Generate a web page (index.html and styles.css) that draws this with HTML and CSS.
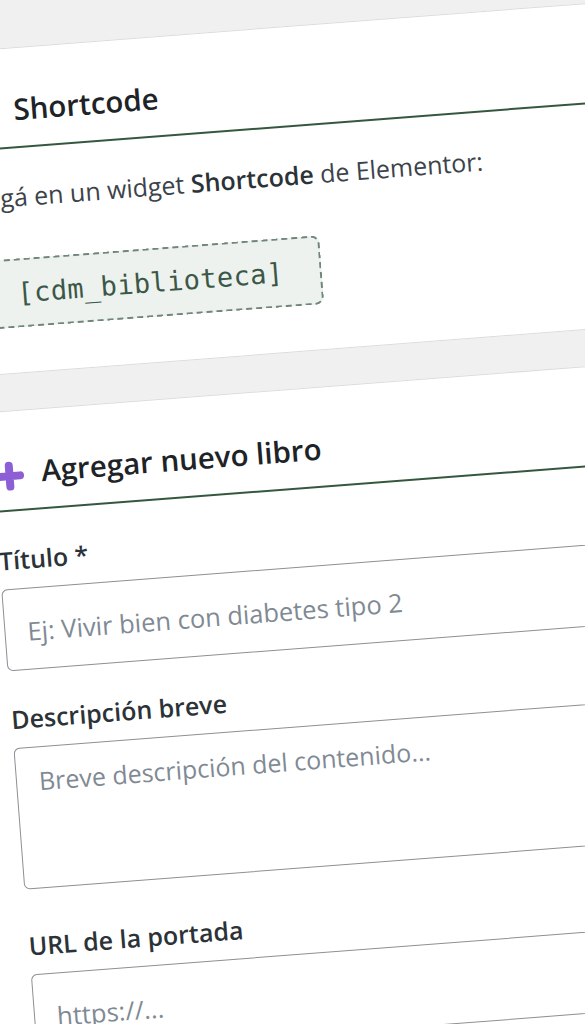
FILE: index.html
```html
<!DOCTYPE html>
<html lang="es">
<head>
<meta charset="utf-8">
<title>Biblioteca · Ajustes</title>
<link rel="stylesheet" href="styles.css">
</head>
<body>
<main class="stage">
  <section class="card card-short">
    <h2 class="card-title">
      <span class="title-icon" aria-hidden="true"></span>
      <span>Shortcode</span>
    </h2>
    <p class="card-text">Pegá en un widget <strong>Shortcode</strong> de Elementor:</p>
    <code class="shortcode">[cdm_biblioteca]</code>
  </section>

  <section class="card">
    <h2 class="card-title">
      <span class="title-icon" aria-hidden="true">
        <svg viewBox="0 0 36 36" width="36" height="36">
          <path d="M17 11V32M6.5 21.5H27.5" stroke="#8d5fd6" stroke-width="8" stroke-linecap="round" fill="none"/>
        </svg>
      </span>
      <span>Agregar nuevo libro</span>
    </h2>

    <form class="book-form">
      <div class="field">
        <label class="field-label" for="titulo">Título *</label>
        <input class="field-input" id="titulo" type="text" placeholder="Ej: Vivir bien con diabetes tipo 2">
      </div>
      <div class="field field-tall">
        <label class="field-label" for="desc">Descripción breve</label>
        <textarea class="field-input field-area" id="desc" placeholder="Breve descripción del contenido..."></textarea>
      </div>
      <div class="field">
        <label class="field-label" for="portada">URL de la portada</label>
        <input class="field-input" id="portada" type="url" placeholder="https://...">
      </div>
    </form>
  </section>
</main>
</body>
</html>
```

FILE: styles.css
```css
html, body {
  margin: 0;
  height: 100%;
  background: #f0f0f1;
  overflow: hidden;
}

body {
  font-family: "Open Sans", "Noto Sans", sans-serif;
  color: #2c3338;
}

/* the whole admin column, tilted */
.stage {
  width: 720px;
  margin-left: -84px;
  padding-top: 48px;
  display: flex;
  flex-direction: column;
  gap: 36px;
  transform-origin: 84px 0;
  transform: rotate(-4.4deg);
}

.card {
  background: #fff;
  border-top: 1px solid #dcdcde;
  border-bottom: 1px solid #dcdcde;
  padding: 43px 40px 46px;
}

.card-short {
  padding-bottom: 45px;
}

.card-title {
  display: flex;
  align-items: center;
  margin: 0;
  padding-bottom: 19px;
  border-bottom: 2px solid #35573f;
  font-size: 29.5px;
  line-height: 36px;
  font-weight: 600;
  color: #1d2327;
}

.title-icon {
  display: flex;
  width: 36px;
  height: 36px;
  margin-right: 13px;
}

.card-text {
  margin: 31px 0 0;
  font-size: 25px;
  line-height: 35px;
  color: #3c434a;
}

.card-text strong {
  font-weight: 600;
  color: #2c3338;
}

.shortcode {
  display: inline-block;
  margin-top: 44px;
  padding: 16px 36px 16px 37px;
  border: 2px dashed #71867a;
  border-radius: 8px;
  background: #edf2ee;
  font-family: "DejaVu Sans Mono", "Liberation Mono", monospace;
  font-size: 27px;
  line-height: 33px;
  letter-spacing: 0.4px;
  color: #3b5747;
}

.book-form {
  margin-top: 32px;
}

.field {
  margin-bottom: 32px;
}

.field-tall {
  margin-bottom: 40px;
}

.field-label {
  display: block;
  margin-bottom: 13px;
  font-size: 25px;
  line-height: 32px;
  font-weight: 600;
  color: #2c3338;
}

.field-input {
  display: block;
  box-sizing: border-box;
  width: 100%;
  height: 82px;
  margin: 0;
  padding: 3px 22px 0;
  border: 1.5px solid #8c8f94;
  border-radius: 6px;
  background: #fff;
  font-family: "Open Sans", "Noto Sans", sans-serif;
  font-size: 25.5px;
  color: #2c3338;
  outline: none;
}

.field-area {
  height: 142px;
  padding: 15px 22px;
  font-size: 25px;
  line-height: 36px;
  resize: none;
}

.field-input::placeholder {
  color: #7f8a94;
  opacity: 1;
}
```
